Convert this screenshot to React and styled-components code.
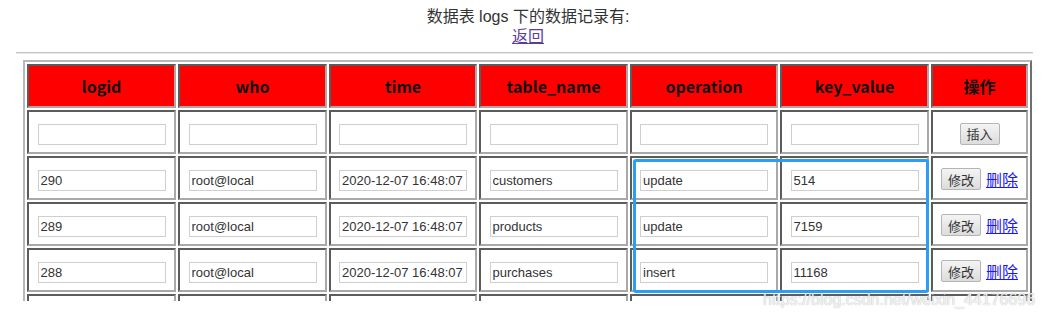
import React from "react";
import styled, { createGlobalStyle } from "styled-components";

const Global = createGlobalStyle`
  html, body { margin: 0; padding: 0; background: #fff; }
  body { font-family: "Noto Sans CJK SC", "Liberation Sans", sans-serif; color: #222; }
`;

const Page = styled.div`
  position: relative;
  width: 1043px;
  height: 319px;
  overflow: hidden;
  padding: 7px 10px 0 16px;
  box-sizing: border-box;
`;

const Title = styled.div`
  margin-left: 7px;
  text-align: center;
  font-family: "Liberation Sans", "Noto Sans CJK SC", sans-serif;
  font-size: 16px;
  line-height: 20px;
  color: #333;
`;

const TitleLine = styled.div`
  height: 20px;
`;

const BackLink = styled.a`
  color: #5a3c9c;
  text-decoration: underline;
`;

const Rule = styled.hr`
  margin: 5px 0 6px 0;
  height: 0;
  border: 0;
  border-top: 1px solid #c4c4c4;
  border-bottom: 1px solid #e6e6e6;
`;

const Clip = styled.div`
  height: 241px;
  overflow: hidden;
`;

const Table = styled.table`
  margin-left: 7px;
  table-layout: fixed;
  border-collapse: separate;
  border-spacing: 2px;
  border: 2px solid;
  border-color: #b8b8b8 #6f6f6f #6f6f6f #b8b8b8;
`;

const Cell = styled.td`
  box-sizing: border-box;
  width: ${(p) => p.$w}px;
  height: 44px;
  padding: 0;
  text-align: center;
  vertical-align: middle;
  border: 2px solid;
  border-color: #5c5c5c #a9a9a9 #a9a9a9 #5c5c5c;
  background: #fff;
`;

const HeadCell = styled(Cell).attrs({ as: "th" })`
  background: #ff0000;
  color: #111;
  font-size: 16px;
  font-weight: bold;
  font-family: "Noto Sans CJK SC", "Open Sans", sans-serif;
`;

const Field = styled.input`
  box-sizing: border-box;
  width: 128px;
  height: 21px;
  padding: 1px 2px;
  border: 1px solid #cfcfcf;
  font-family: "Liberation Sans", Arial, sans-serif;
  font-size: 13px;
  color: #333;
  background: #fff;
  outline: none;
  vertical-align: middle;
`;

const Btn = styled.button`
  box-sizing: border-box;
  height: 22px;
  width: 40px;
  padding: 0;
  border: 1px solid #b5b5b5;
  border-radius: 2px;
  background: linear-gradient(#f4f4f4, #dcdcdc);
  font-family: "Noto Sans CJK SC", sans-serif;
  font-size: 13px;
  color: #333;
  vertical-align: middle;
`;

const DelLink = styled.a`
  margin-left: 5px;
  color: #1a1aee;
  font-size: 16px;
  text-decoration: underline;
  vertical-align: middle;
`;

const Highlight = styled.div`
  position: absolute;
  left: 633px;
  top: 159px;
  width: 296px;
  height: 134px;
  box-sizing: border-box;
  border: 3px solid #2a9df4;
  border-radius: 3px;
  pointer-events: none;
`;

const Watermark = styled.div`
  position: absolute;
  left: 763px;
  top: 291px;
  font-family: "Liberation Sans", Arial, sans-serif;
  font-size: 16px;
  color: rgba(255, 255, 255, 0.85);
  text-shadow: 0 0 1px rgba(120, 120, 120, 0.7);
  white-space: nowrap;
  pointer-events: none;
`;

const widths = [149, 149, 148, 149, 148, 149, 97];
const heads = ["logid", "who", "time", "table_name", "operation", "key_value", "操作"];
const rows = [
  ["290", "root@local", "2020-12-07 16:48:07", "customers", "update", "514"],
  ["289", "root@local", "2020-12-07 16:48:07", "products", "update", "7159"],
  ["288", "root@local", "2020-12-07 16:48:07", "purchases", "insert", "11168"],
];

export default function App() {
  return (
    <>
      <Global />
      <Page>
        <Title>
          <TitleLine>数据表 logs 下的数据记录有:</TitleLine>
          <TitleLine>
            <BackLink href="#">返回</BackLink>
          </TitleLine>
        </Title>
        <Rule />
        <Clip>
          <Table>
            <thead>
              <tr>
                {heads.map((h, i) => (
                  <HeadCell key={h} $w={widths[i]}>{h}</HeadCell>
                ))}
              </tr>
            </thead>
            <tbody>
              <tr>
                {widths.slice(0, 6).map((w, i) => (
                  <Cell key={i} $w={w}><Field defaultValue="" /></Cell>
                ))}
                <Cell $w={97}><Btn>插入</Btn></Cell>
              </tr>
              {rows.map((r, ri) => (
                <tr key={ri}>
                  {r.map((v, i) => (
                    <Cell key={i} $w={widths[i]}><Field defaultValue={v} /></Cell>
                  ))}
                  <Cell $w={97}>
                    <Btn>修改</Btn>
                    <DelLink href="#">删除</DelLink>
                  </Cell>
                </tr>
              ))}
              <tr>
                {widths.map((w, i) => (
                  <Cell key={i} $w={w} />
                ))}
              </tr>
            </tbody>
          </Table>
        </Clip>
        <Highlight />
        <Watermark>https://blog.csdn.net/weixin_44176696</Watermark>
      </Page>
    </>
  );
}
